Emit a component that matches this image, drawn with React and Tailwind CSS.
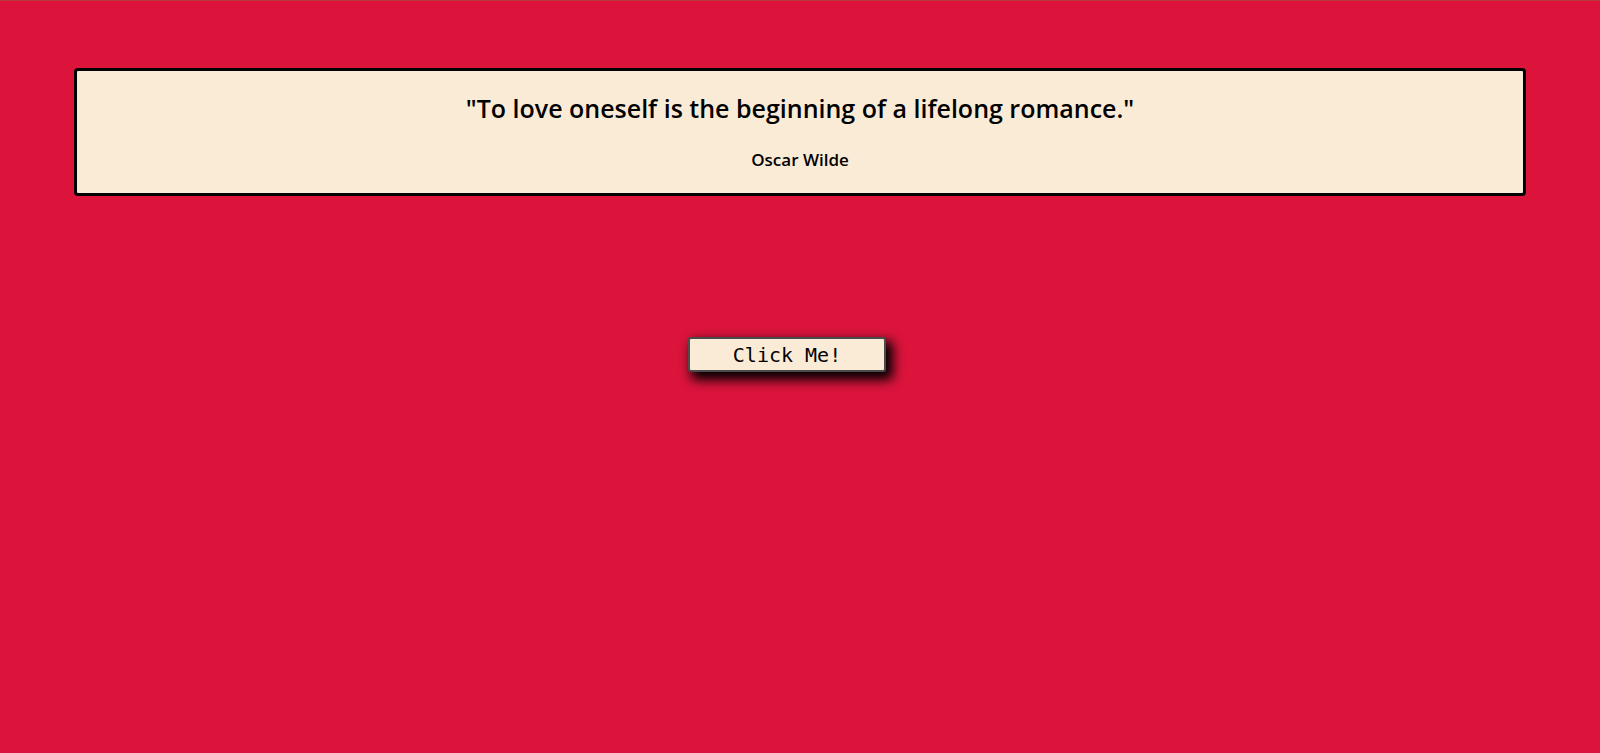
export default function App() {
  return (
    <div className="min-h-[753px] bg-[#DC143C] border-t border-[#b8383e]">
      <div className="pt-[67px]">
        <div className="ml-[74px] w-[1452px] h-[128px] border-[3px] border-black rounded bg-[#FAEBD7] text-center text-black pt-[20px]">
          <p className="text-[25px] leading-[34px] font-semibold font-['Open_Sans',sans-serif]">
            "To love oneself is the beginning of a lifelong romance."
          </p>
          <p className="mt-[23px] text-[17px] leading-[24px] font-semibold font-['Open_Sans',sans-serif]">
            Oscar Wilde
          </p>
        </div>
      </div>
      <div className="pt-[141px] pl-[688px]">
        <button className="w-[198px] h-[35px] border-2 border-[#4b4b4b] rounded-[3px] bg-[#FAEBD7] text-black text-[20px] leading-none font-['DejaVu_Sans_Mono',monospace] shadow-[5px_6px_12px_2px_#000]">
          Click Me!
        </button>
      </div>
    </div>
  );
}
